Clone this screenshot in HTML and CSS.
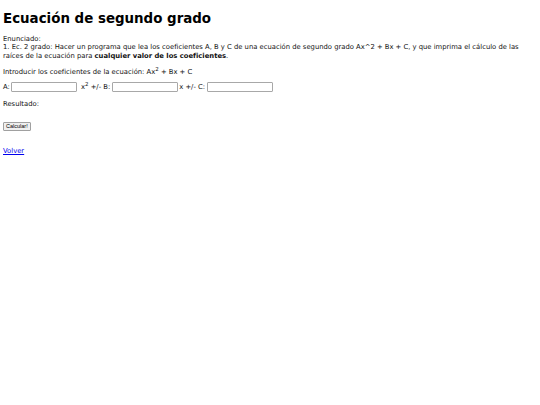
FILE: index.html
```html
<!DOCTYPE html>
<html lang="es">
<head>
<meta charset="utf-8">
<title>Ecuación de segundo grado</title>
<link rel="stylesheet" href="styles.css">
</head>
<body>
<h1 class="title">Ecuación de segundo grado</h1>
<div class="statement">
Enunciado:<br>
1. Ec. 2 grado: Hacer un programa que lea los coeficientes A, B y C de una ecuación de segundo grado Ax^2 + Bx + C, y que imprima el cálculo de las raíces de la ecuación para <b>cualquier valor de los coeficientes</b>.
</div>
<form class="form">
<div class="row intro">Introducir los coeficientes de la ecuación: Ax<sup>2</sup> + Bx + C</div>
<div class="row">A:<input class="field" type="text"> x<sup>2</sup> +/- B:<input class="field" type="text">x +/- C:<input class="field" type="text"></div>
<div class="row">Resultado:</div>
<div class="actions"><button class="btn" type="button">Calcular!</button></div>
</form>
<div class="back"><a class="link" href="#">Volver</a></div>
</body>
</html>
```
FILE: styles.css
```css
html, body {
  background: #fff;
}
body {
  margin: 0;
  padding: 0 3px;
  font-family: "DejaVu Sans", Verdana, sans-serif;
  font-size: 6.8px;
  line-height: 8.5px;
  color: #111;
}
.title {
  font-size: 13.4px;
  line-height: 15px;
  font-weight: bold;
  color: #000;
  margin: 11px 0 0;
  padding: 0;
}
.statement {
  margin-top: 8.5px;
  padding-right: 14px;
}
.form {
  margin: 7.5px 0 0;
}
.row {
  margin-bottom: 8px;
  white-space: nowrap;
}
.row.intro {
  margin-bottom: 6px;
}
sup {
  font-size: 5.5px;
  line-height: 0;
  vertical-align: 3px;
}
.field {
  width: 66px;
  height: 10px;
  box-sizing: border-box;
  border: 1px solid #a8a8a8;
  border-radius: 1px;
  padding: 0;
  margin: 0 1.5px;
  vertical-align: middle;
  font-size: 6px;
}
.actions {
  margin-top: 13px;
}
.btn {
  font-family: "Liberation Sans", Arial, sans-serif;
  font-size: 5.5px;
  height: 9px;
  line-height: 7px;
  padding: 0 2px;
  margin: 0;
  border: 1px solid #a0a0a0;
  border-radius: 1px;
  background: #efefef;
  color: #000;
}
.back {
  margin-top: 16px;
}
.link {
  color: #0000ee;
  text-decoration: underline;
}
```
